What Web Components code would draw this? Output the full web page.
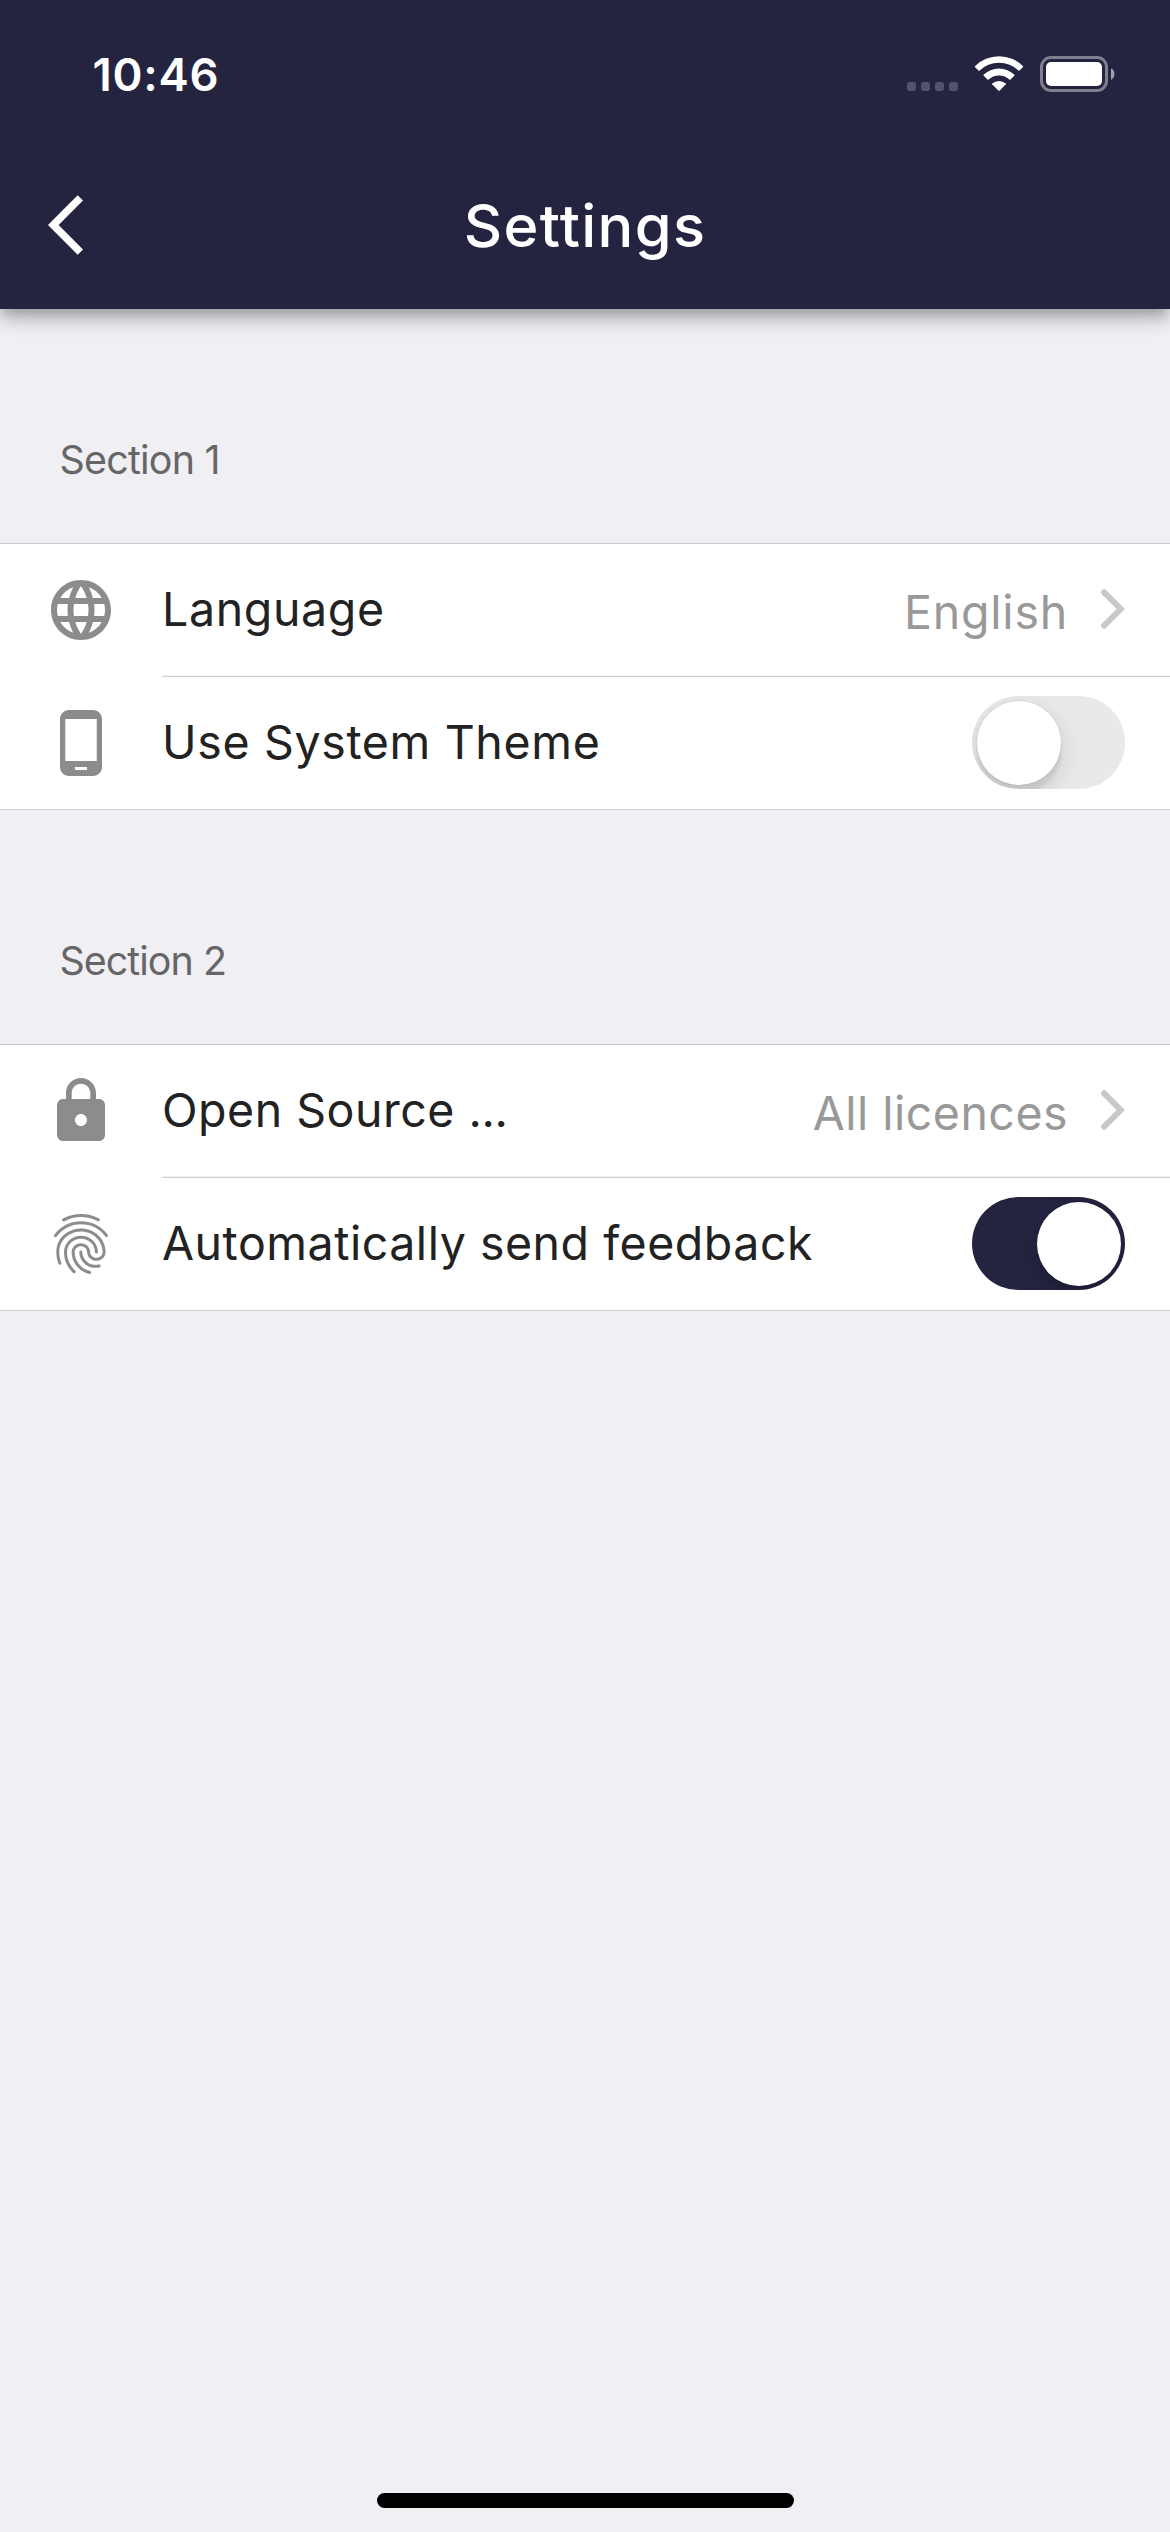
<!DOCTYPE html>
<html lang="en">
<head>
<meta charset="utf-8">
<title>Settings</title>
<style>
  html, body { margin: 0; height: 100%; background: #efeff4; }
  body { font-family: Inter, "Liberation Sans", sans-serif; }
</style>
</head>
<body>
<settings-screen>
  <status-bar slot="top" time="10:46"></status-bar>
  <nav-bar slot="top">Settings</nav-bar>

  <settings-section>
    <section-title slot="title" style="letter-spacing:-.77px">Section 1</section-title>
    <settings-row icon="globe"><span style="letter-spacing:.64px">Language</span>
      <row-value slot="end" style="letter-spacing:.78px">English</row-value></settings-row>
    <settings-row icon="phone"><span style="letter-spacing:.65px">Use System Theme</span>
      <toggle-switch slot="end"></toggle-switch></settings-row>
  </settings-section>

  <settings-section>
    <section-title slot="title" style="letter-spacing:-.97px">Section 2</section-title>
    <settings-row icon="lock"><span style="letter-spacing:.5px">Open Source <span style="letter-spacing:-.4px">...</span></span>
      <row-value slot="end" style="letter-spacing:.48px">All licences</row-value></settings-row>
    <settings-row icon="fingerprint"><span style="letter-spacing:.52px">Automatically send feedback</span>
      <toggle-switch slot="end" on></toggle-switch></settings-row>
  </settings-section>
</settings-screen>

<script>
const define = (name, html) => customElements.define(name, class extends HTMLElement {
  constructor() {
    super();
    this.attachShadow({ mode: 'open' }).innerHTML = typeof html === 'function' ? html(this) : html;
  }
});

define('settings-screen', `
<style>
  :host { display: flex; flex-direction: column; height: 2532px; width: 1170px; overflow: hidden; background: #efeff4; }
  header { position: relative; z-index: 1; flex: none; background: #252440; color: #fff;
    box-shadow: 0 6px 12px -3px rgba(0,0,0,.2), 0 12px 15px 0 rgba(0,0,0,.14), 0 3px 30px 0 rgba(0,0,0,.12); }
  main { flex: 1; }
  footer { flex: none; display: flex; justify-content: center; padding: 0 0 24px 1px; }
  .home { width: 417px; height: 15px; border-radius: 8px; background: #000; }
</style>
<header><slot name="top"></slot></header>
<main><slot></slot></main>
<footer><div class="home"></div></footer>`);

define('status-bar', el => `
<style>
  :host { display: flex; justify-content: space-between; align-items: flex-start; box-sizing: border-box;
    height: 141px; padding: 55px 55px 0 92.5px; }
  .time { font-size: 45.5px; font-weight: 600; line-height: 40px; letter-spacing: .73px; }
  .icons { display: flex; gap: 16px; }
  svg { display: block; }
</style>
<div class="time">${el.getAttribute('time')}</div>
<div class="icons">
  <svg width="51" height="38" viewBox="0 0 51 38" fill="#53526a">
    <rect x="0" y="27" width="9" height="9" rx="2.8"/><rect x="14" y="27" width="9" height="9" rx="2.8"/>
    <rect x="28" y="27" width="9" height="9" rx="2.8"/><rect x="42" y="27" width="9" height="9" rx="2.8"/>
  </svg>
  <svg width="50" height="38" viewBox="974 55 50 38" fill="#fff">
    <path d="M974.9 66.2A34 34 0 0 1 1023.1 66.2L1023.1 66.9L1019.2 70.7H1018.6A28.3 28.3 0 0 0 979.4 70.7H978.8L974.9 66.9Z"/>
    <path d="M983.5 74.8A22.4 22.4 0 0 1 1014.5 74.8V75.4L1010.3 79.8H1009.7A15.6 15.6 0 0 0 988.3 79.8H987.7L983.5 75.4Z"/>
    <path d="M992.2 83.6A10 10 0 0 1 1005.8 83.6V84.3L999.5 90.8H998.5L992.2 84.3Z"/>
  </svg>
  <svg width="75" height="38" viewBox="0 0 75 38">
    <rect x="1.5" y="2.5" width="65" height="33" rx="9.5" fill="none" stroke="#807f90" stroke-width="3"/>
    <rect x="6" y="7" width="56" height="24" rx="5" fill="#fff"/>
    <path d="M71 13.3A6.6 6.6 0 0 1 71 24.9Z" fill="#a09fab"/>
  </svg>
</div>`);

define('nav-bar', `
<style>
  :host { display: grid; grid-template-columns: 1fr auto 1fr; align-items: center; height: 168px; padding: 0 48px; }
  svg { display: block; }
  .title { font-size: 59.5px; font-weight: 520; line-height: 70px; letter-spacing: 1.35px; }
</style>
<svg width="35" height="60" viewBox="0 2 11.67 20" fill="#fff"><path d="M11.67 3.87L9.9 2.1 0 12l9.9 9.9 1.77-1.77L3.54 12z"/></svg>
<div class="title"><slot></slot></div>`);

define('settings-section', `
<style>
  :host { display: block; }
  .rows { display: flex; flex-direction: column; background: #fff;
    border-top: 1px solid #c8c7cc; border-bottom: 1px solid #cfced3; }
  ::slotted(settings-row:last-child) { --divider: none; }
</style>
<slot name="title"></slot>
<div class="rows"><slot></slot></div>`);

define('section-title', `
<style>
  :host { display: flex; box-sizing: border-box; height: 234px; padding: 127px 59.5px 0;
    font-size: 39.4px; line-height: 48px; color: #666; }
</style>
<slot></slot>`);

const ICONS = {
  globe: 'M11.99 2C6.47 2 2 6.48 2 12s4.47 10 9.99 10C17.52 22 22 17.52 22 12S17.52 2 11.99 2zm6.93 6h-2.95c-.32-1.25-.78-2.45-1.38-3.56 1.84.63 3.37 1.91 4.33 3.56zM12 4.04c.83 1.2 1.48 2.53 1.91 3.96h-3.82c.43-1.43 1.08-2.76 1.91-3.96zM4.26 14C4.1 13.36 4 12.69 4 12s.1-1.36.26-2h3.38c-.08.66-.14 1.32-.14 2s.06 1.34.14 2H4.26zm.82 2h2.95c.32 1.25.78 2.45 1.38 3.56-1.84-.63-3.37-1.9-4.33-3.56zm2.95-8H5.08c.96-1.66 2.49-2.93 4.33-3.56C8.81 5.55 8.35 6.75 8.03 8zM12 19.96c-.83-1.2-1.48-2.53-1.91-3.96h3.82c-.43 1.43-1.08 2.76-1.91 3.96zM14.34 14H9.66c-.09-.66-.16-1.32-.16-2s.07-1.35.16-2h4.68c.09.65.16 1.32.16 2s-.07 1.34-.16 2zm.25 5.56c.6-1.11 1.06-2.31 1.38-3.56h2.95c-.96 1.65-2.49 2.93-4.33 3.56zM16.36 14c.08-.66.14-1.32.14-2s-.06-1.34-.14-2h3.38c.16.64.26 1.31.26 2s-.1 1.36-.26 2h-3.38z',
  phone: 'M16 1H8C6.34 1 5 2.34 5 4v16c0 1.66 1.34 3 3 3h8c1.66 0 3-1.34 3-3V4c0-1.66-1.34-3-3-3zm-2 20h-4v-1h4v1zm3.25-3H6.75V4h10.5v14z',
  lock: 'M18 8h-1V6c0-2.76-2.24-5-5-5S7 3.24 7 6v2H6c-1.1 0-2 .9-2 2v10c0 1.1.9 2 2 2h12c1.1 0 2-.9 2-2V10c0-1.1-.9-2-2-2zm-6 9c-1.1 0-2-.9-2-2s.9-2 2-2 2 .9 2 2-.9 2-2 2zm3.1-9H8.9V6c0-1.71 1.39-3.1 3.1-3.1 1.71 0 3.1 1.39 3.1 3.1v2z',
  fingerprint: 'M17.81 4.47c-.08 0-.16-.02-.23-.06C15.66 3.42 14 3 12.01 3c-1.98 0-3.86.47-5.57 1.41-.24.13-.54.04-.68-.2-.13-.24-.04-.55.2-.68C7.82 2.52 9.86 2 12.01 2c2.13 0 3.99.47 6.03 1.52.25.13.34.43.21.67-.09.18-.26.28-.44.28zM3.5 9.72c-.1 0-.2-.03-.29-.09-.23-.16-.28-.47-.12-.7.99-1.4 2.25-2.5 3.75-3.27C9.98 4.04 14 4.03 17.15 5.65c1.5.77 2.76 1.86 3.75 3.25.16.22.11.54-.12.7-.23.16-.54.11-.7-.12-.9-1.26-2.04-2.25-3.39-2.94-2.87-1.47-6.54-1.47-9.4.01-1.36.7-2.5 1.7-3.4 2.96-.08.14-.23.21-.39.21zm6.25 12.07c-.13 0-.26-.05-.35-.15-.87-.87-1.34-1.43-2.01-2.64-.69-1.23-1.05-2.73-1.05-4.34 0-2.97 2.54-5.39 5.66-5.39s5.66 2.42 5.66 5.39c0 .28-.22.5-.5.5s-.5-.22-.5-.5c0-2.42-2.09-4.39-4.66-4.39-2.57 0-4.66 1.97-4.66 4.39 0 1.44.32 2.77.93 3.85.64 1.15 1.08 1.64 1.85 2.42.19.2.19.51 0 .71-.11.1-.24.15-.37.15zm7.17-1.85c-1.19 0-2.24-.3-3.1-.89-1.49-1.01-2.38-2.65-2.38-4.39 0-.28.22-.5.5-.5s.5.22.5.5c0 1.41.72 2.74 1.94 3.56.71.48 1.54.71 2.54.71.24 0 .64-.03 1.04-.1.27-.05.53.13.58.41.05.27-.13.53-.41.58-.57.11-1.07.12-1.21.12zM14.91 22c-.04 0-.09-.01-.13-.02-1.59-.44-2.63-1.03-3.72-2.1-1.4-1.39-2.17-3.24-2.17-5.22 0-1.62 1.38-2.94 3.08-2.94 1.7 0 3.08 1.32 3.08 2.94 0 1.07.93 1.94 2.08 1.94s2.08-.87 2.08-1.94c0-3.77-3.25-6.83-7.25-6.83-2.84 0-5.44 1.58-6.61 4.03-.39.81-.59 1.76-.59 2.8 0 .78.07 2.01.67 3.61.1.26-.03.55-.29.64-.26.1-.55-.04-.64-.29-.49-1.31-.73-2.61-.73-3.96 0-1.2.23-2.29.68-3.24 1.33-2.79 4.28-4.6 7.51-4.6 4.55 0 8.25 3.51 8.25 7.83 0 1.62-1.38 2.94-3.08 2.94s-3.08-1.32-3.08-2.94c0-1.07-.93-1.94-2.08-1.94s-2.08.87-2.08 1.94c0 1.71.66 3.31 1.87 4.51.95.94 1.86 1.46 3.27 1.85.27.07.42.35.35.61-.05.23-.26.38-.47.38z'
};

define('settings-row', el => `
<style>
  :host { display: block; color: #222; font-size: 46.5px; line-height: 56px; }
  .row { display: flex; align-items: center; height: 132px; padding: 0 45px; gap: 45px; }
  .icon { display: block; flex: none; }
  .label { flex: 1; white-space: nowrap; padding-bottom: 2px; }
  .divider { display: var(--divider, block); height: 1px; margin-left: 162px; background: #cfcfd0; box-shadow: 0 -1px #f2f2f2; }
</style>
<div class="row">
  <svg class="icon" width="72" height="72" viewBox="0 0 24 24" fill="#8c8c8c"><path d="${ICONS[el.getAttribute('icon')]}"/></svg>
  <div class="label"><slot></slot></div>
  <slot name="end"></slot>
</div>
<div class="divider"></div>`);

define('row-value', `
<style>
  :host { display: flex; align-items: center; gap: 31px; color: #999; white-space: nowrap; }
  .text { padding-top: 4px; }
  svg { display: block; margin-bottom: 3px; }
</style>
<span class="text"><slot></slot></span>
<svg width="26" height="42" viewBox="0 0 26 42" fill="none" stroke="#c7c7cc" stroke-width="6" stroke-linecap="round">
  <path d="M5.1 4.3L21.8 21L5.1 37.7"/>
</svg>`);

define('toggle-switch', `
<style>
  :host { display: flex; box-sizing: border-box; width: 153px; height: 93px; padding: 4.5px; margin-bottom: 1px;
    border-radius: 46.5px; background: #e9e9ea; overflow: hidden; }
  :host([on]) { background: #252440; justify-content: flex-end; }
  .knob { width: 84px; height: 84px; border-radius: 50%; background: #fff;
    box-shadow: 0 9px 24px rgba(0,0,0,.15), 0 9px 3px rgba(0,0,0,.06), 0 0 0 1px rgba(0,0,0,.04); }
</style>
<div class="knob"></div>`);
</script>
</body>
</html>
